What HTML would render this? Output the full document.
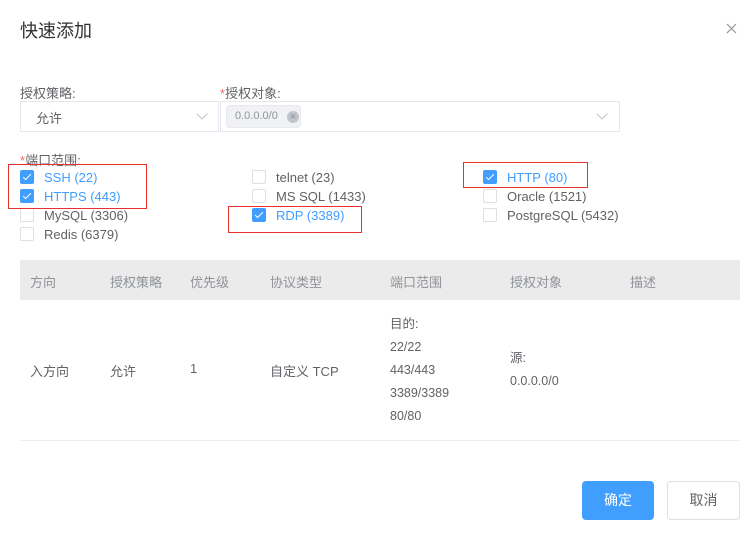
<!DOCTYPE html><html><head><meta charset="utf-8"><style>
body{margin:0;width:754px;height:541px;background:#fff;position:relative;overflow:hidden;font-family:"Liberation Sans","Noto Sans CJK SC",sans-serif;font-size:13px;color:#606266}
.a{position:absolute;white-space:nowrap}
.cb{position:absolute;width:12px;height:12px;border:1px solid #dcdfe6;border-radius:2px;background:#fff}
.cb.on{background:#409eff;border-color:#409eff}
.cb.on:after{content:"";position:absolute;left:4px;top:1px;width:3px;height:7px;border:solid #fff;border-width:0 1.5px 1.5px 0;transform:rotate(45deg)}
.lb{position:absolute;white-space:nowrap;line-height:14px}
.blue{color:#409eff}
.red{position:absolute;border:1px solid #e5322d}
.chev{position:absolute;width:7px;height:7px;border:solid #c0c4cc;border-width:0 1px 1px 0;transform:rotate(45deg)}
</style></head><body>
<div class="a" style="left:20px;top:17px;font-size:18px;color:#303133">快速添加</div>
<svg class="a" style="left:726px;top:23px" width="11" height="11"><path d="M1 1L10 10M10 1L1 10" stroke="#909399" stroke-width="1.2"/></svg>

<div class="a" style="left:20px;top:83px">授权策略:</div>
<div class="a" style="left:220px;top:83px"><span style="color:#f56c6c">*</span>授权对象:</div>
<div class="a" style="left:20px;top:101px;width:197px;height:29px;border:1px solid #e4e7ed"></div>
<div class="a" style="left:36px;top:108px;color:#606266">允许</div>
<div class="chev" style="left:198px;top:110px"></div>
<div class="a" style="left:220px;top:101px;width:398px;height:29px;border:1px solid #e4e7ed"></div>
<div class="a" style="left:226px;top:105px;width:75px;height:23px;background:#f0f2f5;border:1px solid #e9e9eb;border-radius:4px;box-sizing:border-box"></div>
<div class="a" style="left:235px;top:110px;font-size:11px;color:#909399">0.0.0.0/0</div>
<div class="a" style="left:287px;top:111px;width:12px;height:12px;border-radius:50%;background:#c0c4cc;color:#909399;font-size:11px;line-height:12px;text-align:center">×</div>
<div class="chev" style="left:598px;top:110px"></div>

<div class="a" style="left:20px;top:150px"><span style="color:#f56c6c">*</span>端口范围:</div>

<div class="cb on" style="left:20px;top:170px"></div><div class="lb blue" style="left:44px;top:171px">SSH (22)</div>
<div class="cb on" style="left:20px;top:189px"></div><div class="lb blue" style="left:44px;top:190px">HTTPS (443)</div>
<div class="cb" style="left:20px;top:208px"></div><div class="lb" style="left:44px;top:209px">MySQL (3306)</div>
<div class="cb" style="left:20px;top:227px"></div><div class="lb" style="left:44px;top:228px">Redis (6379)</div>

<div class="cb" style="left:252px;top:170px"></div><div class="lb" style="left:276px;top:171px">telnet (23)</div>
<div class="cb" style="left:252px;top:189px"></div><div class="lb" style="left:276px;top:190px">MS SQL (1433)</div>
<div class="cb on" style="left:252px;top:208px"></div><div class="lb blue" style="left:276px;top:209px">RDP (3389)</div>

<div class="cb on" style="left:483px;top:170px"></div><div class="lb blue" style="left:507px;top:171px">HTTP (80)</div>
<div class="cb" style="left:483px;top:189px"></div><div class="lb" style="left:507px;top:190px">Oracle (1521)</div>
<div class="cb" style="left:483px;top:208px"></div><div class="lb" style="left:507px;top:209px">PostgreSQL (5432)</div>

<div class="red" style="left:8px;top:164px;width:137px;height:43px"></div>
<div class="red" style="left:228px;top:206px;width:132px;height:25px"></div>
<div class="red" style="left:463px;top:162px;width:123px;height:24px"></div>

<div class="a" style="left:20px;top:260px;width:720px;height:40px;background:#ebebeb"></div>
<div class="a" style="top:272px;left:30px;color:#909399">方向</div>
<div class="a" style="top:272px;left:110px;color:#909399">授权策略</div>
<div class="a" style="top:272px;left:190px;color:#909399">优先级</div>
<div class="a" style="top:272px;left:270px;color:#909399">协议类型</div>
<div class="a" style="top:272px;left:390px;color:#909399">端口范围</div>
<div class="a" style="top:272px;left:510px;color:#909399">授权对象</div>
<div class="a" style="top:272px;left:630px;color:#909399">描述</div>

<div class="a" style="top:361px;left:30px">入方向</div>
<div class="a" style="top:361px;left:110px">允许</div>
<div class="a" style="top:361px;left:190px">1</div>
<div class="a" style="top:361px;left:270px">自定义 TCP</div>
<div class="a" style="top:313px;left:390px;line-height:23px;font-size:12.5px">目的:<br>22/22<br>443/443<br>3389/3389<br>80/80</div>
<div class="a" style="top:347px;left:510px;line-height:23px;font-size:12.5px">源:<br>0.0.0.0/0</div>
<div class="a" style="left:20px;top:440px;width:720px;height:1px;background:#ebeef5"></div>

<div class="a" style="left:582px;top:481px;width:72px;height:39px;background:#409eff;border-radius:4px;color:#fff;font-size:14px;line-height:39px;text-align:center">确定</div>
<div class="a" style="left:667px;top:481px;width:71px;height:37px;border:1px solid #dcdfe6;border-radius:4px;color:#606266;font-size:14px;line-height:37px;text-align:center">取消</div>
</body></html>
